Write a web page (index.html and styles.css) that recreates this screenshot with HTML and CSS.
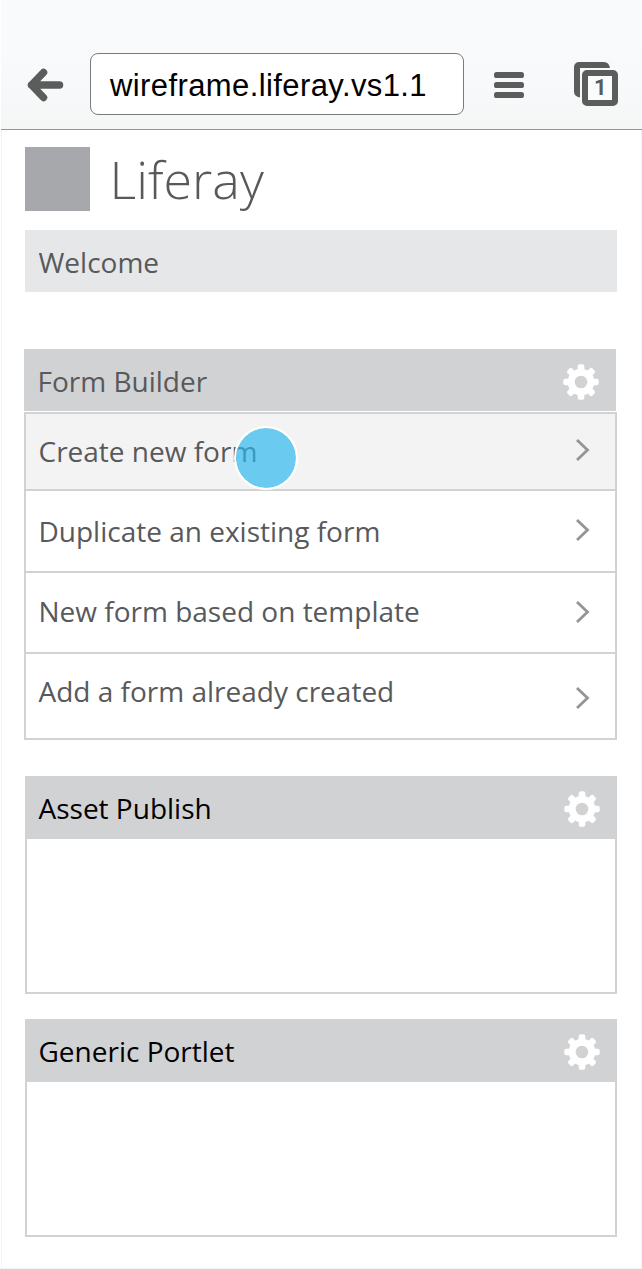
FILE: index.html
```html
<!DOCTYPE html>
<html lang="en">
<head>
<meta charset="utf-8">
<title>Liferay</title>
<link rel="stylesheet" href="styles.css">
</head>
<body>
<svg class="defs" aria-hidden="true">
  <defs>
    <g id="gear">
      <g fill="#fff">
        <g id="spokes"><rect x="-3.300" y="-17.700" width="6.600" height="35.400" rx="2"/><rect x="-17.700" y="-3.300" width="35.400" height="6.600" rx="2"/></g>
        <use href="#spokes" transform="rotate(45)"/>
        <circle r="13.300"/>
      </g>
      <circle r="6.300" fill="#d1d2d4"/>
    </g>
  </defs>
</svg>
<div class="screen">
  <header class="toolbar">
    <svg class="back" viewBox="0 0 38 34"><path d="M17.500 4.500 5.500 17 17.500 29.500M5.500 17h28" fill="none" stroke="#5b5d5c" stroke-width="7.500" stroke-linecap="round" stroke-linejoin="round"/></svg>
    <div class="url"><span>wireframe.liferay.vs1.1</span></div>
    <svg class="menu" viewBox="0 0 30 26" fill="#5b5d5c"><rect width="30" height="6" rx="2.600"/><rect y="10" width="30" height="6" rx="2.600"/><rect y="20" width="30" height="6" rx="2.600"/></svg>
    <div class="tabs">
      <svg viewBox="0 0 44 44"><path d="M6 35.500Q0 34.500 0 29.500V5.500Q0 0 5.500 0H30Q35 0 36 6H6Z" fill="#5b5d5c"/><rect x="11" y="11" width="30" height="30" rx="2" fill="#fafbfb" stroke="#5b5d5c" stroke-width="6"/></svg>
      <span class="count">1</span>
    </div>
  </header>
  <main class="page">
    <div class="brand"><div class="logo"></div><h1>Liferay</h1></div>
    <div class="welcome"><span>Welcome</span></div>
    <section class="builder">
      <h2 class="bar muted"><span>Form Builder</span><svg class="gear" viewBox="-19 -19 38 38"><use href="#gear"/></svg></h2>
      <ul class="list">
        <li class="row active"><span>Create new form</span><svg class="chev" viewBox="0 0 16 24"><path d="M2 2 12.500 12 2 22"/></svg><i class="touch"></i></li>
        <li class="row second"><span>Duplicate an existing form</span><svg class="chev" viewBox="0 0 16 24"><path d="M2 2 12.500 12 2 22"/></svg></li>
        <li class="row third"><span>New form based on template</span><svg class="chev" viewBox="0 0 16 24"><path d="M2 2 12.500 12 2 22"/></svg></li>
        <li class="row last"><span>Add a form already created</span><svg class="chev" viewBox="0 0 16 24"><path d="M2 2 12.500 12 2 22"/></svg></li>
      </ul>
    </section>
    <section class="portlet asset">
      <h2 class="bar"><span>Asset Publish</span><svg class="gear" viewBox="-19 -19 38 38"><use href="#gear"/></svg></h2>
      <div class="body"></div>
    </section>
    <section class="portlet generic">
      <h2 class="bar"><span>Generic Portlet</span><svg class="gear" viewBox="-19 -19 38 38"><use href="#gear"/></svg></h2>
      <div class="body"></div>
    </section>
  </main>
</div>
</body>
</html>
```
FILE: styles.css
```css
* { box-sizing: border-box; }
body { margin: 0; background: #fff; font: 28px/40px "Open Sans", "Noto Sans", sans-serif; color: #58595b; }
.defs { position: absolute; width: 0; height: 0; }
svg { display: block; flex: none; }
h1, h2, ul { margin: 0; padding: 0; font-weight: 400; font-size: inherit; list-style: none; }
span { white-space: nowrap; }
.screen { width: 641px; height: 1269px; margin-left: 1px; border: 1px solid #f4f4f5; }
.toolbar { height: 129px; margin: -1px -1px 0; padding: 53px 0 0 25px; display: flex; align-items: flex-start; background: linear-gradient(#f9fafc, #f9fafc 40%, #f5f7f7); box-shadow: 0 1px #8f95a9; }
.back { width: 38px; height: 34px; margin: 15px 26px 0 0; }
.url { width: 374px; height: 62px; border: 1px solid #797b7d; border-radius: 8px; background: #fff; padding: 12px 0 0 19px; font: 31px/40px "Liberation Sans", sans-serif; letter-spacing: .4px; color: #000; }
.menu { width: 30px; height: 26px; margin: 19px 0 0 30px; }
.tabs { width: 44px; height: 44px; margin: 9px 0 0 50px; display: grid; }
.tabs > * { grid-area: 1 / 1; }
.tabs svg { width: 44px; height: 44px; }
.count { font: 700 22px/24px Roboto, sans-serif; color: #5b5d5c; padding: 14px 0 0 20px; z-index: 1; }
.page { padding: 18px 0 0 23px; }
.brand { display: flex; height: 64px; }
.logo { width: 64.5px; height: 64px; background: #a7a8ac; }
h1 { font-size: 52px; line-height: 70px; font-weight: 300; margin: -3px 0 0 20px; }
.welcome { width: 592px; height: 62px; margin-top: 19px; padding: 12px 0 0 13.5px; background: #e6e7e8; }
.builder { width: 592px; margin: 57px 0 0 -1px; }
.bar { height: 62px; background: #d1d2d4; color: #000; display: flex; justify-content: space-between; padding: 12px 16px 0 13.5px; }
.muted { color: #58595b; }
.gear { width: 38px; height: 38px; margin-top: 2px; }
.list { width: 593px; margin-top: 1px; border: 2px solid #d1d2d4; }
.row { position: relative; display: flex; justify-content: space-between; padding: 17px 24px 0 12.5px; height: 77px; border-bottom: 2px solid #d1d2d4; }
.active { background: #f3f3f3; }
.second { height: 82px; padding-top: 20px; }
.third { height: 81px; padding-top: 18px; }
.last { height: 84px; padding-top: 17px; border: 0; }
.chev { width: 16px; height: 24px; margin: 7px 0 0; fill: none; stroke: #939598; stroke-width: 2.8; }
.third .chev { margin-top: 9px; }
.last .chev { margin-top: 15px; }
.touch { position: absolute; left: 207.5px; top: 12px; width: 64px; height: 64px; border: 2px solid #fff; border-radius: 50%; background: rgba(41, 183, 238, .68); background-clip: padding-box; z-index: 2; }
.portlet { width: 592px; }
.portlet .bar { height: 63px; }
.asset { margin-top: 36px; }
.generic { margin-top: 25px; }
.body { height: 155px; border: 2px solid #d1d2d4; border-top: 0; }
```
